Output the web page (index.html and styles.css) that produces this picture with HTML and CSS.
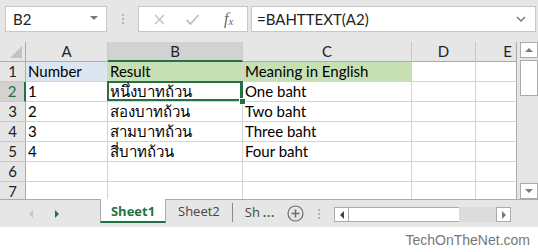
FILE: index.html
```html
<!DOCTYPE html>
<html lang="en">
<head>
  <meta charset="UTF-8">
  <title>BAHTTEXT</title>
  <link rel="stylesheet" href="styles.css">
</head>
<body>
  <div class="topbar">
    <div class="namebox">
      <span>B2</span>
      <span class="drop"></span>
    </div>
    <div class="grip">
      <i></i><i></i><i></i>
    </div>
    <div class="fbuttons">
      <svg class="fx-icon" width="13" height="13" viewBox="0 0 13 13">
        <path d="M2 2 L11 11 M11 2 L2 11" stroke="#c0c0c0" stroke-width="1.4" fill="none"/>
      </svg>
      <svg class="fx-icon" width="15" height="13" viewBox="0 0 15 13">
        <path d="M1.5 7 L5.5 11 L13.5 2" stroke="#c0c0c0" stroke-width="1.8" fill="none"/>
      </svg>
      <span class="fx">f<sub>x</sub></span>
    </div>
    <div class="formula">
      <span>=BAHTTEXT(A2)</span>
      <svg width="10" height="6" viewBox="0 0 10 6">
        <path d="M1 1 L5 5 L9 1" stroke="#7a7a7a" stroke-width="1.5" fill="none"/>
      </svg>
    </div>
  </div>

  <div class="sheet">
    <div class="grid">
      <div class="hd corner"><span class="tri"></span></div>
      <div class="hd">A</div>
      <div class="hd sel-col">B</div>
      <div class="hd">C</div>
      <div class="hd">D</div>
      <div class="hd col-e">E</div>

      <div class="rh">1</div>
      <div class="c blue">Number</div>
      <div class="c green">Result</div>
      <div class="c green">Meaning in English</div>
      <div class="c"></div>
      <div class="c end"></div>

      <div class="rh sel-row">2</div>
      <div class="c">1</div>
      <div class="c active">หนึ่งบาทถ้วน<span class="handle"></span></div>
      <div class="c">One baht</div>
      <div class="c"></div>
      <div class="c end"></div>

      <div class="rh">3</div>
      <div class="c">2</div>
      <div class="c">สองบาทถ้วน</div>
      <div class="c">Two baht</div>
      <div class="c"></div>
      <div class="c end"></div>

      <div class="rh">4</div>
      <div class="c">3</div>
      <div class="c">สามบาทถ้วน</div>
      <div class="c">Three baht</div>
      <div class="c"></div>
      <div class="c end"></div>

      <div class="rh">5</div>
      <div class="c">4</div>
      <div class="c">สี่บาทถ้วน</div>
      <div class="c">Four baht</div>
      <div class="c"></div>
      <div class="c end"></div>

      <div class="rh">6</div>
      <div class="c"></div>
      <div class="c"></div>
      <div class="c"></div>
      <div class="c"></div>
      <div class="c end"></div>

      <div class="rh last">7</div>
      <div class="c last"></div>
      <div class="c last"></div>
      <div class="c last"></div>
      <div class="c last"></div>
      <div class="c last end"></div>
    </div>

    <div class="vscroll">
      <div class="arrow"><span class="up"></span></div>
      <div class="thumb"></div>
      <div class="track"></div>
      <div class="arrow"><span class="down"></span></div>
    </div>
  </div>

  <div class="tabbar">
    <div class="tabnav">
      <span class="nav-left"></span>
      <span class="nav-right"></span>
    </div>
    <div class="tab active-tab">Sheet1</div>
    <div class="tab">Sheet2</div>
    <div class="tab cut">Sh</div>
    <span class="more">...</span>
    <svg class="add" width="17" height="17" viewBox="0 0 17 17">
      <circle cx="8.5" cy="8.5" r="7.5" stroke="#6e6e6e" stroke-width="1.2" fill="none"/>
      <path d="M8.5 4.5 V12.5 M4.5 8.5 H12.5" stroke="#6e6e6e" stroke-width="1.6"/>
    </svg>
    <div class="grip small">
      <i></i><i></i><i></i>
    </div>
    <div class="hscroll">
      <div class="harrow"><span class="left"></span></div>
      <div class="hthumb"></div>
      <div class="htrack"></div>
      <div class="harrow"><span class="right"></span></div>
    </div>
  </div>

  <div class="footer">TechOnTheNet.com</div>
</body>
</html>
```

FILE: styles.css
```css
body, html {
  margin: 0;
  padding: 0;
  width: 538px;
  height: 252px;
  overflow: hidden;
  background: #ffffff;
  font-family: Lato, "Noto Sans", sans-serif;
  color: #000;
}

/* formula bar */
.topbar {
  height: 42px;
  background: #e6e6e6;
  display: flex;
  align-items: flex-start;
  padding: 6px 2px 0 5px;
  box-sizing: border-box;
}

.namebox {
  width: 102px;
  height: 26px;
  box-sizing: border-box;
  background: #fff;
  border: 1px solid #c6c6c6;
  display: flex;
  align-items: center;
  justify-content: space-between;
  padding: 0 8px 0 7px;
  font-size: 15px;
  color: #222;
}

.drop {
  width: 0;
  height: 0;
  border-left: 4px solid transparent;
  border-right: 4px solid transparent;
  border-top: 4px solid #7a7a7a;
  margin-top: -2px;
}

.grip {
  width: 31px;
  height: 26px;
  display: flex;
  flex-direction: column;
  align-items: center;
  justify-content: center;
  gap: 2px;
}

.grip i {
  width: 2px;
  height: 2px;
  background: #b4b4b4;
}

.fbuttons {
  width: 110px;
  height: 26px;
  box-sizing: border-box;
  background: #fff;
  border: 1px solid #c6c6c6;
  display: flex;
  align-items: center;
  padding: 0 0 0 14px;
  gap: 19px;
}

.fx {
  font-family: "Liberation Serif", serif;
  font-style: italic;
  font-size: 16px;
  color: #6a6a6a;
  margin-left: 5px;
  line-height: 1;
}

.fx sub {
  font-size: 11px;
  vertical-align: -1px;
}

.formula {
  flex: 1;
  margin-left: 3px;
  height: 26px;
  box-sizing: border-box;
  background: #fff;
  border: 1px solid #c6c6c6;
  display: flex;
  align-items: center;
  justify-content: space-between;
  padding: 0 9px 0 5px;
  font-size: 15px;
  color: #222;
}

/* sheet grid */
.sheet {
  display: grid;
  grid-template-columns: 517px 21px;
  background: #e6e6e6;
  height: 157px;
  overflow: hidden;
}

.grid {
  display: grid;
  grid-template-columns: 26px 82px 135px 169px 64px 41px;
  grid-template-rows: 20px repeat(6, 20px) 17px;
  background: #fff;
  align-self: start;
}

.hd {
  background: #e6e6e6;
  border-right: 1px solid #c9c9c9;
  border-bottom: 1px solid #ababab;
  box-sizing: border-box;
  text-align: center;
  font-size: 15px;
  line-height: 19px;
  color: #222;
  min-width: 0;
}

.hd.col-e {
  text-align: right;
  padding-right: 4px;
  border-right: 1px solid #ababab;
}

.corner {
  position: relative;
  border-right: 1px solid #ababab;
}

.tri {
  position: absolute;
  right: 3px;
  bottom: 3px;
  width: 0;
  height: 0;
  border-left: 12px solid transparent;
  border-bottom: 12px solid #c3c3c3;
}

.sel-col {
  background: #d2d2d2;
  border-bottom: 2px solid #217346;
  line-height: 18px;
}

.rh {
  background: #e6e6e6;
  border-right: 1px solid #ababab;
  border-bottom: 1px solid #c9c9c9;
  box-sizing: border-box;
  text-align: center;
  font-size: 15px;
  line-height: 19px;
  color: #222;
}

.sel-row {
  background: #d2d2d2;
  color: #217346;
  border-right: 2px solid #217346;
}

.c {
  border-right: 1px solid #d4d4d4;
  border-bottom: 1px solid #d4d4d4;
  box-sizing: border-box;
  font-size: 15px;
  line-height: 19px;
  padding-left: 2px;
  white-space: nowrap;
  overflow: hidden;
  min-width: 0;
}

.c.end {
  border-right: 1px solid #ababab;
}

.c.last, .rh.last {
  border-bottom: none;
}

.blue {
  background: #dce6f1;
}

.green {
  background: #c6e0b4;
}

.active {
  position: relative;
  overflow: visible;
  box-shadow: inset 0 0 0 2px #217346;
  margin: -1px 0 0 -1px;
  padding-left: 3px;
  line-height: 21px;
  border-right-color: #217346;
}

.handle {
  position: absolute;
  right: -4px;
  bottom: -4px;
  width: 5px;
  height: 5px;
  background: #217346;
  border: 1px solid #fff;
}

/* vertical scroll */
.vscroll {
  padding-left: 3px;
  width: 18px;
  display: flex;
  flex-direction: column;
}

.vscroll .arrow {
  flex: none;
  height: 16px;
  background: #fff;
  border: 1px solid #ababab;
  box-sizing: border-box;
  display: flex;
  align-items: center;
  justify-content: center;
}

.vscroll .thumb {
  flex: none;
  height: 36px;
  margin-top: 2px;
  background: #fff;
  border: 1px solid #ababab;
  box-sizing: border-box;
}

.vscroll .track {
  flex: none;
  height: 87px;
  background: #e6e6e6;
}

.up, .down {
  width: 0;
  height: 0;
  border-left: 4px solid transparent;
  border-right: 4px solid transparent;
}

.up {
  border-bottom: 4px solid #7a7a7a;
}

.down {
  border-top: 4px solid #7a7a7a;
}

/* sheet tabs */
.tabbar {
  height: 28px;
  background: #e6e6e6;
  border-top: 1px solid #ababab;
  box-sizing: border-box;
  display: flex;
  align-items: flex-start;
}

.tabnav {
  width: 100px;
  height: 27px;
  display: flex;
  align-items: center;
  gap: 22px;
  padding-left: 29px;
  box-sizing: border-box;
}

.nav-left {
  width: 0;
  height: 0;
  border-top: 4px solid transparent;
  border-bottom: 4px solid transparent;
  border-right: 4px solid #c6c6c6;
}

.nav-right {
  width: 0;
  height: 0;
  border-top: 4px solid transparent;
  border-bottom: 4px solid transparent;
  border-left: 4px solid #217346;
}

.tab {
  font-family: "Open Sans", sans-serif;
  font-size: 13px;
  color: #444;
  height: 23px;
  line-height: 23px;
  padding: 0 12px;
}

.active-tab {
  background: #fff;
  margin-top: -1px;
  height: 24px;
  width: 66px;
  box-sizing: border-box;
  border-left: 1px solid #ababab;
  border-right: 1px solid #ababab;
  border-bottom: 2px solid #217346;
  color: #217346;
  font-weight: bold;
  text-align: center;
  padding: 1px 0 0;
}

.tab.cut {
  margin-top: 3px;
  height: 19px;
  line-height: 19px;
  border-left: 1px solid #8a8a8a;
  padding: 0 0 0 12px;
}

.more {
  color: #217346;
  font-size: 13px;
  line-height: 18px;
  margin: 3px 0 0 3px;
  font-weight: bold;
  letter-spacing: 1px;
}

.add {
  margin: 5px 0 0 12px;
}

.grip.small {
  width: 30px;
  height: 27px;
}

.hscroll {
  display: flex;
  margin-top: 7px;
  height: 15px;
  width: 177px;
}

.harrow {
  width: 15px;
  height: 15px;
  background: #fff;
  border: 1px solid #ababab;
  box-sizing: border-box;
  display: flex;
  align-items: center;
  justify-content: center;
}

.hthumb {
  width: 110px;
  background: #fff;
  border-top: 1px solid #ababab;
  border-bottom: 1px solid #ababab;
  box-sizing: border-box;
}

.htrack {
  width: 37px;
  background: #dcdcdc;
}

.left, .right {
  width: 0;
  height: 0;
  border-top: 4px solid transparent;
  border-bottom: 4px solid transparent;
}

.left {
  border-right: 4px solid #444;
}

.right {
  border-left: 4px solid #7a7a7a;
}

.footer {
  text-align: right;
  font-family: "Liberation Sans", Arial, sans-serif;
  font-size: 14px;
  line-height: 16px;
  color: #777;
  padding: 5px 8px 0 0;
}
```
